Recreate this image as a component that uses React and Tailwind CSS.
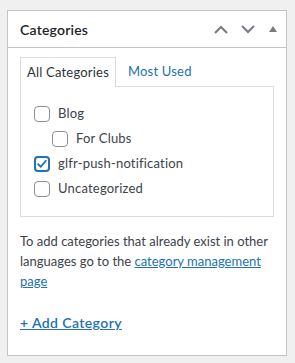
import React from "react";

const font = { fontFamily: 'Lato, "Noto Sans", sans-serif' };

function Box({ checked }) {
  return (
    <span
      className={
        "flex h-[16px] w-[16px] shrink-0 items-center justify-center rounded-[4px] border bg-white " +
        (checked ? "border-[#2271b1] border-[2px]" : "border-[#8c8f94]")
      }
    >
      {checked && (
        <svg width="14" height="14" viewBox="0 0 14 14">
          <path d="M2.5 7.2 L5.6 10.2 L11.5 3.2" fill="none" stroke="#2271b1" strokeWidth="2.2" strokeLinecap="round" strokeLinejoin="round" />
        </svg>
      )}
    </span>
  );
}

function Row({ label, checked, indent }) {
  return (
    <div className={"flex h-[25px] items-center gap-[8px] " + (indent ? "pl-[18px]" : "")}>
      <Box checked={checked} />
      <span className="text-[13px] tracking-[0.2px] text-[#3c434a]">{label}</span>
    </div>
  );
}

export default function App() {
  return (
    <div className="h-[363px] w-[295px] bg-[#f0f0f1] pl-[7px] pr-[8px] pt-[10px]" style={font}>
      <div className="h-[346px] border border-[#c3c4c7] bg-white">
        <div className="flex h-[37px] items-center border-b border-[#c3c4c7] pl-[12px] pr-[9px]">
          <span className="flex-1 text-[14px] font-semibold tracking-[0.2px] text-[#1d2327]">Categories</span>
          <svg width="14" height="9" viewBox="0 0 14 9" className="mr-[13px]">
            <path d="M1 8 L7 2 L13 8" fill="none" stroke="#787c82" strokeWidth="2" />
          </svg>
          <svg width="14" height="9" viewBox="0 0 14 9" className="mr-[14px]">
            <path d="M1 1 L7 7 L13 1" fill="none" stroke="#787c82" strokeWidth="2" />
          </svg>
          <svg width="8" height="6" viewBox="0 0 8 6">
            <path d="M4 0 L8 6 L0 6 Z" fill="#787c82" />
          </svg>
        </div>
        <div className="px-[12px] pt-[9px]">
          <div className="flex items-end">
            <div className="relative -mb-px flex h-[30px] items-center border border-b-0 border-[#dcdcde] bg-white px-[6px] text-[13px] tracking-[0.2px] text-[#2c3338]">
              All Categories
            </div>
            <div className="ml-[12px] flex h-[29px] items-center text-[13px] tracking-[0.2px] text-[#2271b1]">Most Used</div>
          </div>
          <div className="border border-[#dcdcde] px-[13px] pb-[15px] pt-[14px]">
            <Row label="Blog" />
            <Row label="For Clubs" indent />
            <Row label="glfr-push-notification" checked />
            <Row label="Uncategorized" />
          </div>
          <p className="mt-[14px] text-[13px] leading-[20px] text-[#3c434a]">
            To add categories that already exist in other languages go to the{" "}
            <a className="text-[#2271b1] underline">category management page</a>
          </p>
          <div className="mt-[22px] text-[14px] font-semibold leading-[20px] tracking-[0.4px] text-[#2271b1] underline">
            + Add Category
          </div>
        </div>
      </div>
    </div>
  );
}
